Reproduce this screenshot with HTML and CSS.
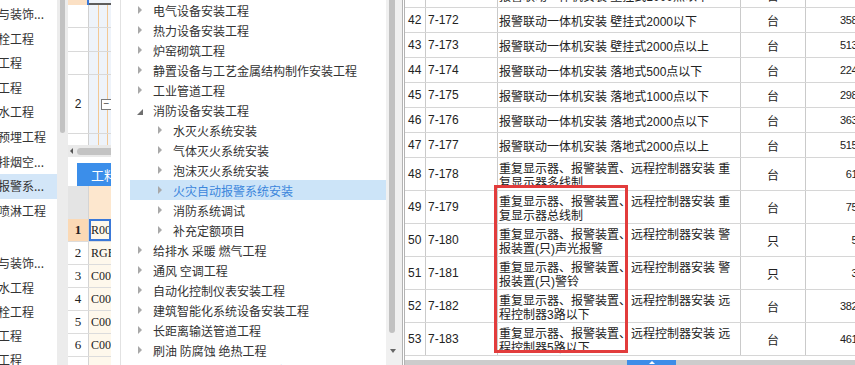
FILE: index.html
```html
<!DOCTYPE html>
<html lang="zh-CN">
<head>
<meta charset="utf-8">
<title>定额库 - 消防设备安装工程</title>
<link rel="stylesheet" href="styles.css">
</head>
<body>
<div class="wrap">
    <!-- 左侧章节列表 -->
    <div class="side">
        <div class="side-lists">
            <ul class="side-list">
                <li>筑与装饰...</li>
                <li>火栓工程</li>
                <li>装工程</li>
                <li>道工程</li>
                <li>排水工程</li>
                <li>管预埋工程</li>
                <li>防排烟空...</li>
                <li class="on">灾报警系...</li>
                <li>动喷淋工程</li>
            </ul>
            <ul class="side-list side-list2">
                <li>筑与装饰...</li>
                <li>排水工程</li>
                <li>火栓工程</li>
                <li>装工程</li>
                <li>道工程</li>
            </ul>
        </div>
        <div class="side-bar"><span class="side-thumb"></span></div>
    </div>

    <!-- 工料机表格 -->
    <div class="sheet">
        <div class="st-row st-first"><span class="st-h"></span><span class="st-c"></span></div>
        <div class="st-row"><span class="st-h"></span><span class="st-c"></span></div>
        <div class="st-row st-r24"><span class="st-h"></span><span class="st-c"></span></div>
        <div class="st-row"><span class="st-h"></span><span class="st-c"></span></div>
        <div class="st-row st-tall"><span class="st-h">2</span><span class="st-c"><i class="fold">−</i></span></div>
        <div class="st-row st-end"><span class="st-h"></span><span class="st-c"></span></div>
        <div class="hscroll"><span class="hs-arrow"></span><span class="hs-thumb"></span></div>
        <div class="tabs"><span class="tab">工料机显示</span></div>
        <div class="dr dr-head"><span class="dr-h"></span><span class="dr-c"></span></div>
        <div class="dr dr-on"><span class="dr-h">1</span><span class="dr-c">R00101</span></div>
        <div class="dr"><span class="dr-h">2</span><span class="dr-c">RGF101</span></div>
        <div class="dr"><span class="dr-h">3</span><span class="dr-c">C00103</span></div>
        <div class="dr"><span class="dr-h">4</span><span class="dr-c">C00312</span></div>
        <div class="dr"><span class="dr-h">5</span><span class="dr-c">C00405</span></div>
        <div class="dr"><span class="dr-h">6</span><span class="dr-c">C00512</span></div>
        <div class="dr"><span class="dr-h"></span><span class="dr-c"></span></div>
    </div>

    <div class="split"></div>

    <!-- 定额章节树 -->
    <div class="tree">
        <div class="node"><i class="arr"></i>电气设备安装工程</div>
        <div class="node"><i class="arr"></i>热力设备安装工程</div>
        <div class="node"><i class="arr"></i>炉窑砌筑工程</div>
        <div class="node"><i class="arr"></i>静置设备与工艺金属结构制作安装工程</div>
        <div class="node"><i class="arr"></i>工业管道工程</div>
        <div class="node"><i class="arr open"></i>消防设备安装工程</div>
        <div class="node sub"><i class="arr"></i>水灭火系统安装</div>
        <div class="node sub"><i class="arr"></i>气体灭火系统安装</div>
        <div class="node sub"><i class="arr"></i>泡沫灭火系统安装</div>
        <div class="node sub on"><i class="arr"></i>火灾自动报警系统安装</div>
        <div class="node sub"><i class="arr"></i>消防系统调试</div>
        <div class="node sub"><i class="arr"></i>补充定额项目</div>
        <div class="node"><i class="arr"></i>给排水 采暖 燃气工程</div>
        <div class="node"><i class="arr"></i>通风 空调工程</div>
        <div class="node"><i class="arr"></i>自动化控制仪表安装工程</div>
        <div class="node"><i class="arr"></i>建筑智能化系统设备安装工程</div>
        <div class="node"><i class="arr"></i>长距离输送管道工程</div>
        <div class="node"><i class="arr"></i>刷油 防腐蚀 绝热工程</div>
        <div class="node"><i class="arr"></i>大型机械设备安装及拆除工程</div>
    </div>
    <div class="vbar"><span class="vb-thumb"></span><span class="vb-down"></span></div>

    <!-- 定额子目 -->
    <div class="grid">
        <div class="rows">
            <div class="row"><span class="c-no">41</span><span class="c-code">7-171</span><span class="c-name">报警联动一体机安装 壁挂式1000点以下</span><span class="c-unit">台</span><span class="c-price">2783.40</span></div>
            <div class="row"><span class="c-no">42</span><span class="c-code">7-172</span><span class="c-name">报警联动一体机安装 壁挂式2000以下</span><span class="c-unit">台</span><span class="c-price">3585.20</span></div>
            <div class="row"><span class="c-no">43</span><span class="c-code">7-173</span><span class="c-name">报警联动一体机安装 壁挂式2000点以上</span><span class="c-unit">台</span><span class="c-price">5132.46</span></div>
            <div class="row"><span class="c-no">44</span><span class="c-code">7-174</span><span class="c-name">报警联动一体机安装 落地式500点以下</span><span class="c-unit">台</span><span class="c-price">2248.15</span></div>
            <div class="row"><span class="c-no">45</span><span class="c-code">7-175</span><span class="c-name">报警联动一体机安装 落地式1000点以下</span><span class="c-unit">台</span><span class="c-price">2986.72</span></div>
            <div class="row"><span class="c-no">46</span><span class="c-code">7-176</span><span class="c-name">报警联动一体机安装 落地式2000点以下</span><span class="c-unit">台</span><span class="c-price">3637.08</span></div>
            <div class="row"><span class="c-no">47</span><span class="c-code">7-177</span><span class="c-name">报警联动一体机安装 落地式2000点以上</span><span class="c-unit">台</span><span class="c-price">5151.63</span></div>
            <div class="row tall"><span class="c-no">48</span><span class="c-code">7-178</span><span class="c-name">重复显示器、报警装置、远程控制器安装 重复显示器多线制</span><span class="c-unit">台</span><span class="c-price">612.30</span></div>
            <div class="row tall"><span class="c-no">49</span><span class="c-code">7-179</span><span class="c-name">重复显示器、报警装置、远程控制器安装 重复显示器总线制</span><span class="c-unit">台</span><span class="c-price">752.18</span></div>
            <div class="row tall"><span class="c-no">50</span><span class="c-code">7-180</span><span class="c-name">重复显示器、报警装置、远程控制器安装 警报装置(只)声光报警</span><span class="c-unit">只</span><span class="c-price">51.36</span></div>
            <div class="row tall"><span class="c-no">51</span><span class="c-code">7-181</span><span class="c-name">重复显示器、报警装置、远程控制器安装 警报装置(只)警铃</span><span class="c-unit">只</span><span class="c-price">34.80</span></div>
            <div class="row tall"><span class="c-no">52</span><span class="c-code">7-182</span><span class="c-name">重复显示器、报警装置、远程控制器安装 远程控制器3路以下</span><span class="c-unit">台</span><span class="c-price">3826.44</span></div>
            <div class="row tall"><span class="c-no">53</span><span class="c-code">7-183</span><span class="c-name">重复显示器、报警装置、远程控制器安装 远程控制器5路以下</span><span class="c-unit">台</span><span class="c-price">4617.90</span></div>
        </div>
        <div class="tfoot"><span class="tfoot-btn"></span></div>
    </div>
</div>
<div class="mark"></div>
</body>
</html>
```

FILE: styles.css
```css
* {
    box-sizing: border-box;
}
html, body {
    margin: 0;
    padding: 0;
}
body {
    width: 855px;
    height: 365px;
    overflow: hidden;
    position: relative;
    background: #fff;
    color: #333;
    font: 12px "Noto Sans CJK SC", sans-serif;
}
ul {
    list-style: none;
    margin: 0;
    padding: 0;
}
i {
    font-style: normal;
}
.wrap {
    display: flex;
    height: 365px;
}

/* 左侧列表 */
.side {
    display: flex;
    width: 68px;
    flex: none;
}
.side-lists {
    width: 57px;
    padding-top: 2px;
    overflow: hidden;
}
.side-list li {
    height: 24.6px;
    line-height: 24.6px;
    white-space: nowrap;
    overflow: hidden;
    text-indent: -14px;
}
.side-list li.on {
    background: #d3e6f8;
}
.side-list2 {
    margin-top: 28px;
}
.side-list2 li {
    height: 24.2px;
    line-height: 24.2px;
}
.side-bar {
    width: 11px;
    background: #ececec;
}
.side-thumb {
    display: block;
    width: 5px;
    height: 133px;
    margin-left: 3px;
    background: #c2c2c2;
    border-radius: 0 0 3px 3px;
}

/* 工料机表格 */
.sheet {
    width: 43px;
    flex: none;
    overflow: hidden;
    font-family: "Liberation Serif", "Noto Sans CJK SC", serif;
    color: #222;
}
.st-row {
    display: flex;
    height: 23px;
    border-bottom: 1px solid #d9d9d9;
}
.st-r24 {
    height: 24px;
}
.st-tall {
    height: 59px;
}
.st-end {
    height: 11px;
    border-bottom: none;
}
.st-h {
    width: 21px;
    flex: none;
    border-right: 1px solid #d0d0d0;
    text-align: center;
    font-family: "Liberation Sans", sans-serif;
}
.st-tall .st-h {
    line-height: 58px;
}
.st-c {
    flex: 1;
    background:
        linear-gradient(to right, transparent 9px, #f3c894 9px, #f3c894 10px, transparent 10px,
            transparent 18px, #f3c894 18px, #f3c894 19px, transparent 19px),
        #eef3fa;
}
.st-first {
    height: 5px;
    border-bottom: none;
}
.st-first .st-h {
    background: #fbe0c4;
    border-right: 2px solid #3a78d8;
}
.st-first .st-c {
    background: #eef3fa;
    border-bottom: 2px solid #5c5c5c;
}
.fold {
    display: block;
    width: 11px;
    height: 11px;
    margin: 24px 0 0 12px;
    border: 1px solid #7a7a7a;
    background: #fff;
    font: 10px/8px "Liberation Sans", sans-serif;
    text-align: center;
    color: #444;
}
.hscroll {
    display: flex;
    align-items: center;
    height: 12px;
    padding-left: 2px;
    background: #e9e9e9;
}
.hs-arrow {
    width: 0;
    height: 0;
    border-right: 3px solid #555;
    border-top: 3px solid transparent;
    border-bottom: 3px solid transparent;
}
.hs-thumb {
    flex: 1;
    height: 7px;
    margin-left: 4px;
    background: #c3c3c3;
    border-radius: 4px 0 0 4px;
}
.tabs {
    height: 29px;
    padding: 6px 0 0 9px;
}
.tab {
    display: block;
    height: 23px;
    line-height: 23px;
    padding-left: 14px;
    background: #3b8eea;
    color: #fff;
    font: 13px/23px "Noto Sans CJK SC", sans-serif;
    white-space: nowrap;
    overflow: hidden;
}
.dr {
    display: flex;
    height: 23px;
    line-height: 22px;
    border-bottom: 1px solid #dcdcdc;
    font-size: 13px;
}
.dr-h {
    width: 21px;
    flex: none;
    border-right: 1px solid #d4d4d4;
    text-align: center;
    background: #fff;
}
.dr-c {
    flex: 1;
    padding-left: 2px;
    background: #fef8ec;
    font-size: 12px;
    white-space: nowrap;
    overflow: hidden;
}
.dr-head {
    height: 33px;
    border-bottom: none;
}
.dr-head .dr-h {
    background: #e4e4e4;
}
.dr-head .dr-c {
    background: #fde7ce;
}
.dr-on .dr-h {
    background: #fbd9b5;
    font-weight: bold;
}
.dr-on .dr-c {
    border: 2px solid #3a78d8;
    line-height: 18px;
    padding-left: 0;
}

.split {
    width: 10px;
    flex: none;
    border-right: 1px solid #e2e2e2;
}

/* 章节树 */
.tree {
    width: 265px;
    flex: none;
    padding-left: 9px;
    overflow: hidden;
    color: #333;
}
.node {
    display: flex;
    align-items: center;
    height: 20px;
    padding-left: 8px;
    white-space: nowrap;
}
.node.sub {
    padding-left: 28px;
}
.node.on {
    background: #cce4f8;
    color: #3b86dc;
}
.arr {
    flex: none;
    width: 0;
    height: 0;
    margin-right: 11px;
    border-left: 4px solid #a8a8a8;
    border-top: 4px solid transparent;
    border-bottom: 4px solid transparent;
}
.arr.open {
    margin: 3px 10px 0 -1px;
    border-top: none;
    border-bottom: 6px solid #6f6f6f;
    border-left: 6px solid transparent;
}
.vbar {
    display: flex;
    flex-direction: column;
    width: 16px;
    flex: none;
    background: #f0f0f0;
}
.vb-thumb {
    width: 6px;
    height: 333px;
    margin-left: 3px;
    background: #c1c1c1;
    border-radius: 0 0 3px 3px;
}
.vb-down {
    width: 0;
    height: 0;
    margin: auto 0 12px 4px;
    border-top: 4px solid #666;
    border-left: 3px solid transparent;
    border-right: 3px solid transparent;
}

/* 定额子目表 */
.grid {
    flex: 1;
    min-width: 0;
    overflow: hidden;
    border-left: 3px double #b3b3b3;
    font-family: "Liberation Sans", "Noto Sans CJK SC", sans-serif;
    color: #222;
}
.rows {
    margin-top: -17px;
}
.row {
    display: flex;
    height: 25px;
    border-bottom: 1px solid #d6d6d6;
}
.row.tall {
    height: 33px;
}
.row > span {
    flex: none;
    display: flex;
    align-items: center;
    border-right: 1px solid #cacaca;
    white-space: nowrap;
}
.c-no {
    width: 21px;
    padding-left: 3px;
}
.c-code {
    width: 72px;
    padding-left: 2px;
}
.c-name {
    width: 243px;
    padding: 0 2px 0 1px;
}
.c-unit {
    width: 65px;
    justify-content: center;
}
.c-price {
    width: 80px;
    justify-content: flex-end;
    padding-right: 8px;
    font-size: 11px;
    letter-spacing: -0.4px;
}
.row.tall .c-name {
    align-items: flex-start;
    padding-top: 4px;
    line-height: 14px;
    white-space: normal;
}
.tfoot {
    height: 10px;
    margin-top: 4px;
    background: #cccccc;
}
.tfoot-btn {
    display: block;
    width: 49px;
    height: 10px;
    margin-left: 222px;
    padding-top: 1px;
    background: #3d8de8;
}
.tfoot-btn::after {
    content: "";
    display: block;
    width: 0;
    margin: 0 auto;
    border-bottom: 3px solid #fff;
    border-left: 3px solid transparent;
    border-right: 3px solid transparent;
}

/* 标注框 */
.mark {
    position: absolute;
    left: 494px;
    top: 185px;
    width: 134px;
    height: 168px;
    border: 3px solid #e23c3c;
}
```
